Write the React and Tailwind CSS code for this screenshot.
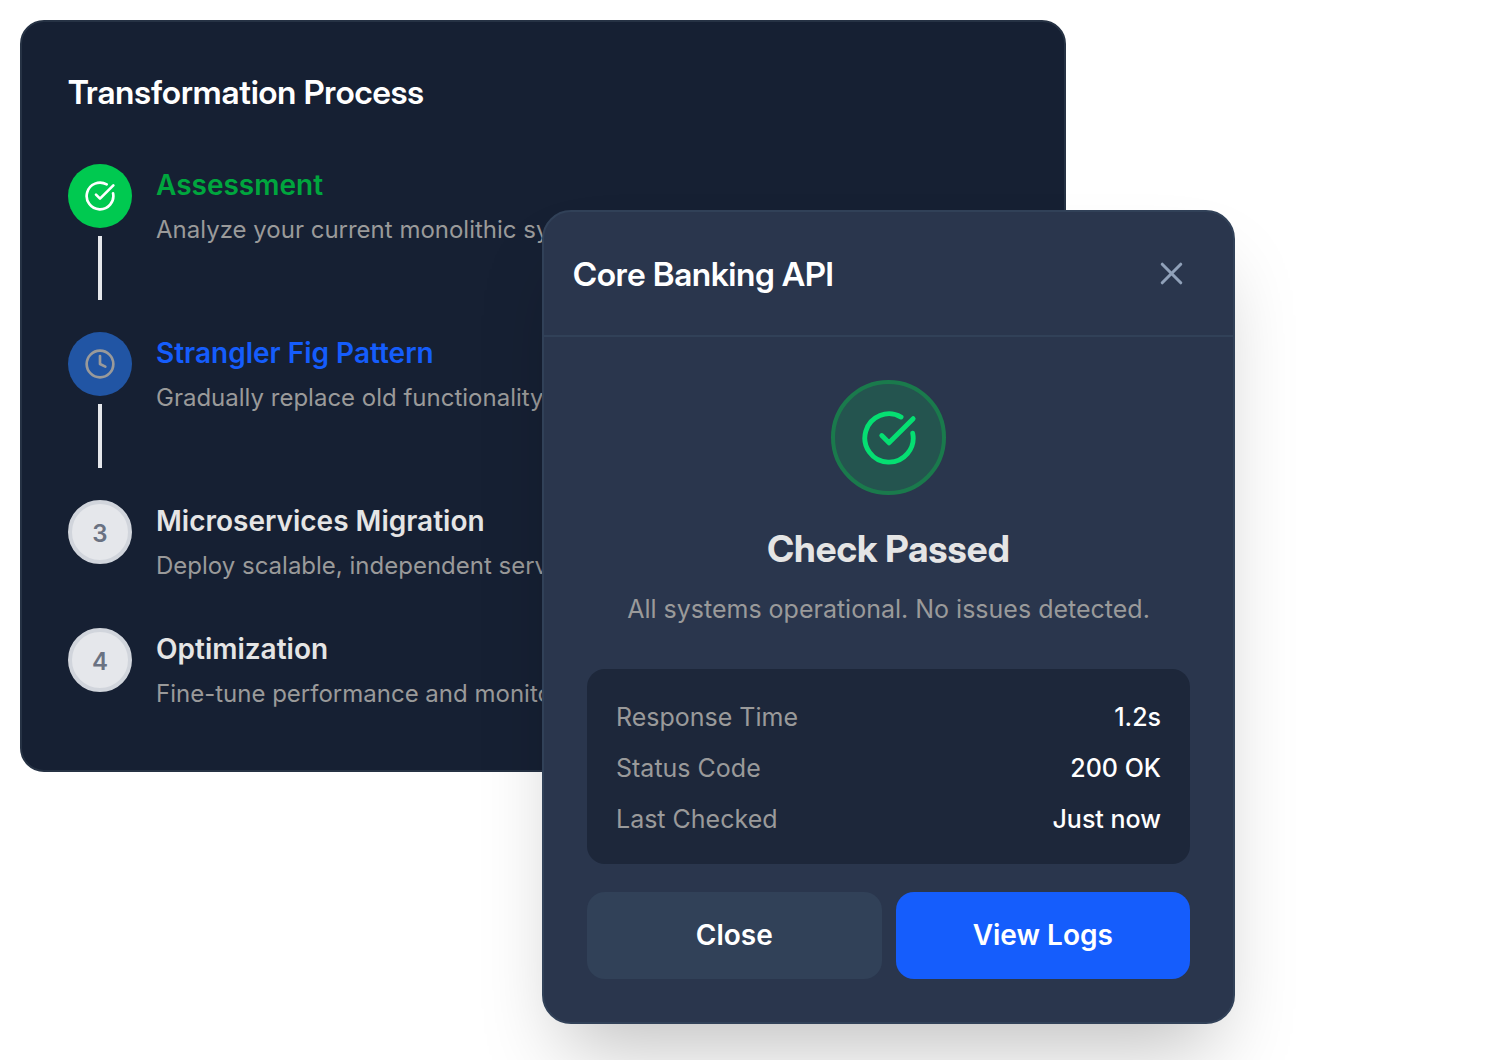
import { CircleCheckBig, Clock, X } from 'lucide-react'

const steps = [
  {
    title: 'Assessment',
    description: 'Analyze your current monolithic system',
    status: 'done',
  },
  {
    title: 'Strangler Fig Pattern',
    description: 'Gradually replace old functionality',
    status: 'active',
  },
  {
    title: 'Microservices Migration',
    description: 'Deploy scalable, independent services',
    status: 'pending',
  },
  {
    title: 'Optimization',
    description: 'Fine-tune performance and monitoring',
    status: 'pending',
  },
]

const details = [
  { label: 'Response Time', value: '1.2s' },
  { label: 'Status Code', value: '200 OK' },
  { label: 'Last Checked', value: 'Just now' },
]

const titleColors = {
  done: 'text-[#00a63e]',
  active: 'text-[#155dfc]',
  pending: 'text-[#e5e5e5]',
}

function StepMarker({ status, number }) {
  if (status === 'done') {
    return (
      <div className="flex size-16 items-center justify-center rounded-full bg-[#00c950] text-white">
        <CircleCheckBig size={32} strokeWidth={2} />
      </div>
    )
  }
  if (status === 'active') {
    return (
      <div className="flex size-16 items-center justify-center rounded-full bg-[#2155a4] text-[#9a9a9a]">
        <Clock size={32} strokeWidth={2} />
      </div>
    )
  }
  return (
    <div className="flex size-16 items-center justify-center rounded-full border-4 border-[#d1d5dc] bg-[#e5e7eb] pt-1 text-2xl font-semibold text-[#6a7282]">
      {number}
    </div>
  )
}

function ProcessCard() {
  return (
    <section className="w-full max-w-[1046px] rounded-3xl border-2 border-[#263244] bg-[#162033] p-[46px]">
      <h2 className="mb-12 font-['Inter_Display',Inter,sans-serif] text-[33px] leading-12 font-semibold text-white">
        Transformation Process
      </h2>
      <ol className="flex flex-col gap-8">
        {steps.map((step, i) => (
          <li key={step.title} className="flex gap-6">
            <div className="flex shrink-0 flex-col items-center">
              <StepMarker status={step.status} number={i + 1} />
              {step.status !== 'pending' && <div className="mt-2 h-16 w-1 bg-[#e5e7eb]" />}
            </div>
            <div className="pb-3">
              <h3 className={`text-[28px] leading-[42px] font-semibold ${titleColors[step.status]}`}>{step.title}</h3>
              <p className="mt-1.5 text-2xl leading-9 whitespace-nowrap text-[#9a9a9a]">{step.description}</p>
            </div>
          </li>
        ))}
      </ol>
    </section>
  )
}

function StatusDialog() {
  return (
    <div
      role="dialog"
      aria-labelledby="dialog-title"
      className="absolute top-[210px] left-[542px] w-[693px] rounded-[29px] border-2 border-[#314158] bg-[#2a364d] shadow-[0_45px_80px_-22px_rgba(0,0,0,0.25)]"
    >
      <header className="flex items-center justify-between border-b-2 border-[#314158] py-7 pr-7 pl-[29px]">
        <h2
          id="dialog-title"
          className="font-['Inter_Display',Inter,sans-serif] text-[33px] leading-12 font-semibold text-white"
        >
          Core Banking API
        </h2>
        <button type="button" aria-label="Close dialog" className="p-[15px] text-[#90a1b9]">
          <X size={37} strokeWidth={2} />
        </button>
      </header>
      <div className="p-[43px]">
        <div className="flex flex-col items-center">
          <div className="flex size-[115px] items-center justify-center rounded-full border-4 border-[#1a7a4c] bg-[#24544f] text-[#05df72]">
            <CircleCheckBig size={58} strokeWidth={2} />
          </div>
          <h3 className="mt-7 font-['Inter_Display',Inter,sans-serif] text-[37px] leading-[52px] font-bold text-[#e5e5e5]">
            Check Passed
          </h3>
          <p className="mt-4 text-[25px] leading-9 text-[#9a9a9a]">All systems operational. No issues detected.</p>
        </div>
        <dl className="mt-[42px] flex flex-col gap-[14px] rounded-[18px] bg-[#1d273a] px-[29px] pt-[30px] pb-[26px] text-[25px] leading-[37px]">
          {details.map((row) => (
            <div key={row.label} className="flex justify-between">
              <dt className="text-[#9a9a9a]">{row.label}</dt>
              <dd className="font-medium text-white">{row.value}</dd>
            </div>
          ))}
        </dl>
        <div className="mt-7 flex gap-[14px] text-[28px] leading-[43px] font-semibold text-white">
          <button type="button" className="flex-1 rounded-[18px] bg-[#314158] py-[22px]">
            Close
          </button>
          <button type="button" className="flex-1 rounded-[18px] bg-[#155dfc] py-[22px]">
            View Logs
          </button>
        </div>
      </div>
    </div>
  )
}

export default function App() {
  return (
    <main className="relative h-screen overflow-hidden bg-white p-5 font-['Inter',sans-serif]">
      <ProcessCard />
      <StatusDialog />
    </main>
  )
}
